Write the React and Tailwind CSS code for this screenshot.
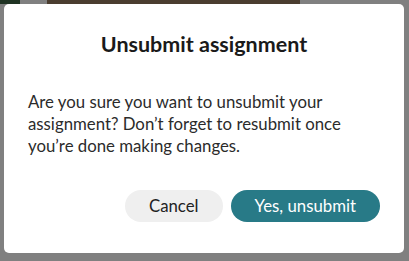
import React from 'react';

/* page behind the dialog, dimmed by the overlay */
function Backdrop() {
  return (
    <div className="absolute inset-0 bg-[#808080]">
      <div className="flex h-[4px]">
        <div className="w-[20px] bg-[#1f3323]" />
        <div className="w-[27px]" />
        <div className="w-[253px] bg-[#4a3d2f]" />
      </div>
    </div>
  );
}

export default function App() {
  return (
    <div className="relative h-[261px] w-[409px] overflow-hidden font-['Lato','Liberation_Sans',sans-serif]">
      <Backdrop />
      <div className="absolute left-[4px] top-[4px] flex h-[249px] w-[400px] flex-col rounded-[5px] bg-white px-6">
        <h2 className="mt-[26px] text-center text-[21.5px] font-bold leading-[28px] text-[#1a1a1a]">
          Unsubmit assignment
        </h2>
        <p className="mt-[33px] w-[330px] text-[16.8px] leading-[22px] text-[#2b2b2b]">
          Are you sure you want to unsubmit your assignment? Don’t forget to resubmit once you’re done making changes.
        </p>
        <div className="mt-[33px] flex justify-end gap-2">
          <button className="h-[32px] rounded-full bg-[#efefef] px-6 text-[16.8px] text-[#222]">
            Cancel
          </button>
          <button className="h-[32px] rounded-full bg-[#287a87] px-6 text-[16.8px] text-white">
            Yes, unsubmit
          </button>
        </div>
      </div>
    </div>
  );
}
